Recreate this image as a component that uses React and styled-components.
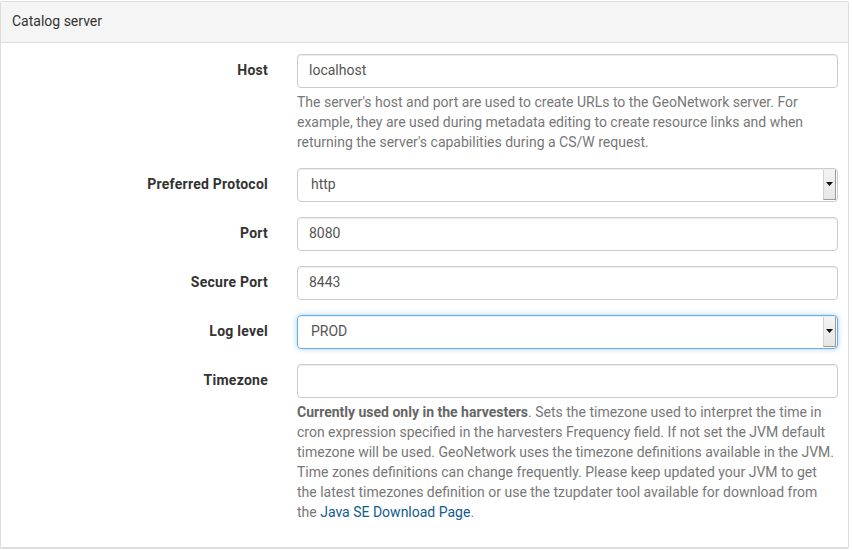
import React from "react";
import styled, { createGlobalStyle } from "styled-components";

const GlobalStyle = createGlobalStyle`
  body {
    margin: 0;
    background: #fff;
    font-family: Roboto, "Helvetica Neue", Arial, sans-serif;
    font-size: 14px;
    line-height: 1.42857;
    color: #333;
  }
  * { box-sizing: border-box; }
`;

const Panel = styled.div`
  width: 849px;
  height: 548px;
  margin-top: 1px;
  border: 1px solid #ddd;
  border-bottom-width: 2px;
  border-radius: 2px;
  background: #fff;
  overflow: hidden;
`;

const PanelHeading = styled.div`
  background: #f5f5f5;
  border-bottom: 1px solid #ddd;
  padding: 10px 11px;
  height: 41px;
  color: #333;
`;

const PanelBody = styled.div`
  padding: 11px 10px 10px 0;
`;

const FormGroup = styled.div`
  display: grid;
  grid-template-columns: 267px 1fr;
  column-gap: 29px;
  margin-bottom: 15px;
`;

const Label = styled.label`
  text-align: right;
  font-weight: 700;
  letter-spacing: 0.25px;
  padding-top: 7px;
  color: #333;
`;

const Field = styled.div`
  display: flex;
  flex-direction: column;
`;

const Input = styled.div`
  height: 34px;
  border: 1px solid #ccc;
  border-radius: 4px;
  padding: 6px 11px;
  color: #555;
  box-shadow: inset 0 1px 1px rgba(0, 0, 0, 0.075);
`;

const Select = styled.div`
  height: 34px;
  display: flex;
  border: 1px solid ${(p) => (p.$focus ? "#66afe9" : "#ccc")};
  border-radius: 4px;
  color: #555;
  box-shadow: ${(p) =>
    p.$focus
      ? "inset 0 1px 1px rgba(0,0,0,.075), 0 0 5px rgba(102,175,233,.6)"
      : "inset 0 1px 1px rgba(0,0,0,.075)"};
  overflow: hidden;
`;

const SelectValue = styled.div`
  flex: 1;
  padding: 6px 13px;
`;

const SelectButton = styled.div`
  width: 13px;
  margin: 1px 1px 1px 0;
  background: linear-gradient(#f4f4f4, #e6e6e6);
  border-left: 1px solid #d0d0d0;
  border-right: 1px solid #9a9a9a;
  border-bottom: 1px solid #9a9a9a;
  display: flex;
  align-items: center;
  justify-content: center;
`;

const Help = styled.p`
  margin: 5px 0 0;
  color: #777;
  b { color: #666; }
  a { color: #0f5c8f; text-decoration: none; }
`;

const Arrow = () => (
  <svg width="7" height="4" viewBox="0 0 7 4">
    <path d="M0 0h7L3.5 4z" fill="#111" />
  </svg>
);

const SelectBox = ({ value, focus }) => (
  <Select $focus={focus}>
    <SelectValue>{value}</SelectValue>
    <SelectButton>
      <Arrow />
    </SelectButton>
  </Select>
);

export default function App() {
  return (
    <>
      <GlobalStyle />
      <Panel>
        <PanelHeading>Catalog server</PanelHeading>
        <PanelBody>
          <FormGroup>
            <Label>Host</Label>
            <Field>
              <Input>localhost</Input>
              <Help>
                The server's host and port are used to create URLs to the GeoNetwork server. For
                example, they are used during metadata editing to create resource links and when
                returning the server's capabilities during a CS/W request.
              </Help>
            </Field>
          </FormGroup>
          <FormGroup>
            <Label>Preferred Protocol</Label>
            <Field>
              <SelectBox value="http" />
            </Field>
          </FormGroup>
          <FormGroup>
            <Label>Port</Label>
            <Field>
              <Input>8080</Input>
            </Field>
          </FormGroup>
          <FormGroup>
            <Label>Secure Port</Label>
            <Field>
              <Input>8443</Input>
            </Field>
          </FormGroup>
          <FormGroup>
            <Label>Log level</Label>
            <Field>
              <SelectBox value="PROD" focus />
            </Field>
          </FormGroup>
          <FormGroup>
            <Label>Timezone</Label>
            <Field>
              <Input />
              <Help>
                <b>Currently used only in the harvesters</b>. Sets the timezone used to interpret
                the time in cron expression specified in the harvesters Frequency field. If not set
                the JVM default timezone will be used. GeoNetwork uses the timezone definitions
                available in the JVM. Time zones definitions can change frequently. Please keep
                updated your JVM to get the latest timezones definition or use the tzupdater tool
                available for download from the <a href="#">Java SE Download Page</a>.
              </Help>
            </Field>
          </FormGroup>
        </PanelBody>
      </Panel>
    </>
  );
}
